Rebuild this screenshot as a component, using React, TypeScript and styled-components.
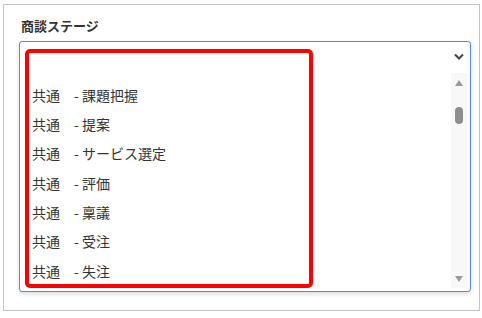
import styled, { createGlobalStyle } from 'styled-components';

const GlobalStyle = createGlobalStyle`
  html, body {
    margin: 0;
    padding: 0;
    background: #ffffff;
  }
  body {
    font-family: "Noto Sans CJK JP", "Noto Sans", sans-serif;
  }
`;

const Panel = styled.div`
  box-sizing: border-box;
  width: 477px;
  height: 307px;
  margin: 4px 0 0 3px;
  padding: 12px 8px 0 15px;
  border: 1px solid #c4c4c4;
  background: #ffffff;
`;

const Label = styled.div`
  font-size: 13px;
  font-weight: 700;
  line-height: 18px;
  color: #333333;
  padding-left: 2px;
  margin-bottom: 6px;
`;

const SelectBox = styled.div`
  box-sizing: border-box;
  width: 452px;
  height: 251px;
  display: flex;
  border: 1px solid #4a90e2;
  border-radius: 3px;
  background: #ffffff;
  box-shadow: 0 2px 4px rgba(0, 0, 0, 0.14);
`;

const OptionsColumn = styled.div`
  flex: 1;
  padding: 7px 0 0 5px;
`;

const Highlight = styled.div`
  box-sizing: border-box;
  width: 288px;
  height: 239px;
  border: 4px solid #ff0000;
  border-radius: 5px;
  overflow: hidden;
`;

const Option = styled.div<{ $blank?: boolean }>`
  height: ${({ $blank }) => ($blank ? '27.5px' : '29.4px')};
  line-height: 29.4px;
  padding-left: 3px;
  font-size: 14px;
  color: #333333;
  white-space: pre;
`;

const SideColumn = styled.div`
  width: 16px;
  display: flex;
  flex-direction: column;
  padding: 0 3px 3px 0;
`;

const ChevronRow = styled.div`
  height: 31px;
  display: flex;
  align-items: center;
  justify-content: center;
  padding-bottom: 3px;
  box-sizing: border-box;
`;

const Track = styled.div`
  flex: 1;
  display: flex;
  flex-direction: column;
  align-items: center;
  background: #f8f8f8;
`;

const ArrowButton = styled.div`
  height: 19px;
  display: flex;
  align-items: center;
  justify-content: center;
`;

const Thumb = styled.div`
  width: 8px;
  height: 17px;
  margin-top: 15px;
  border-radius: 4px;
  background: #8e8e8e;
`;

const Spacer = styled.div`
  flex: 1;
`;

const options = [
  '',
  '共通　- 課題把握',
  '共通　- 提案',
  '共通　- サービス選定',
  '共通　- 評価',
  '共通　- 稟議',
  '共通　- 受注',
  '共通　- 失注',
];

const Triangle = ({ up }: { up: boolean }) => (
  <svg width="8" height="6" viewBox="0 0 8 6">
    <polygon points={up ? '0,6 8,6 4,0' : '0,0 8,0 4,6'} fill="#9a9a9a" />
  </svg>
);

export default function App() {
  return (
    <>
      <GlobalStyle />
      <Panel>
        <Label>商談ステージ</Label>
        <SelectBox>
          <OptionsColumn>
            <Highlight>
              {options.map((o, i) => (
                <Option key={i} $blank={o === ''}>
                  {o}
                </Option>
              ))}
            </Highlight>
          </OptionsColumn>
          <SideColumn>
            <ChevronRow>
              <svg width="10" height="7" viewBox="0 0 10 7">
                <polyline
                  points="1,1.5 5,5.5 9,1.5"
                  fill="none"
                  stroke="#444444"
                  strokeWidth="2"
                />
              </svg>
            </ChevronRow>
            <Track>
              <ArrowButton>
                <Triangle up />
              </ArrowButton>
              <Thumb />
              <Spacer />
              <ArrowButton>
                <Triangle up={false} />
              </ArrowButton>
            </Track>
          </SideColumn>
        </SelectBox>
      </Panel>
    </>
  );
}
